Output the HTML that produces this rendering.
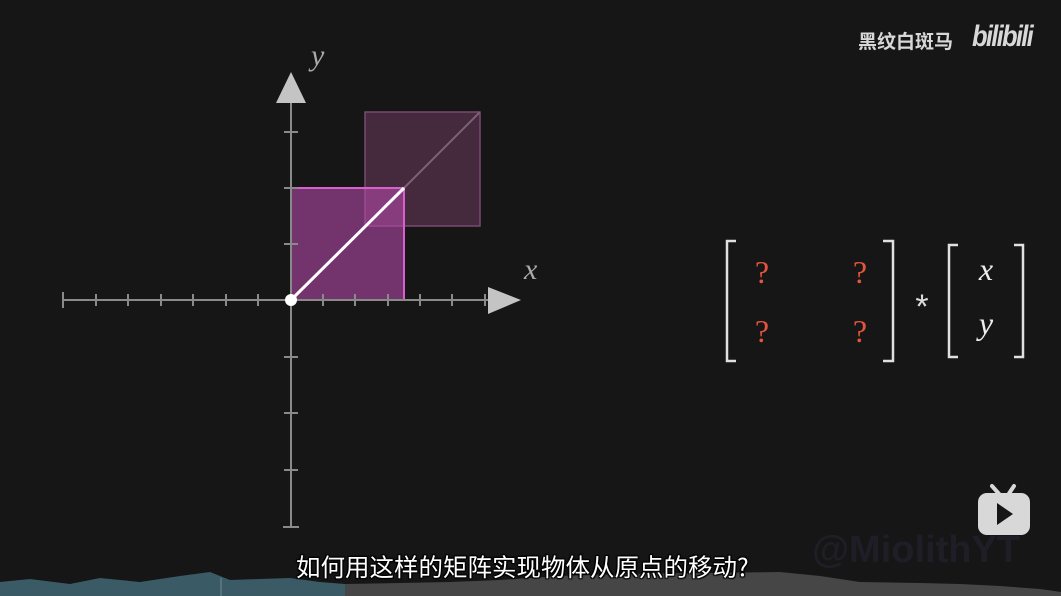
<!DOCTYPE html>
<html><head><meta charset="utf-8"><style>
html,body{margin:0;padding:0;background:#161616;width:1061px;height:596px;overflow:hidden;position:relative;font-family:"Liberation Sans","Noto Sans CJK SC",sans-serif}
.sub{position:absolute;left:296px;top:549px;font-size:24.5px;color:#fff;white-space:nowrap;text-shadow:0 0 2px #000,1px 1px 1px #000,-1px -1px 1px #000,1px -1px 1px #000,-1px 1px 1px #000;font-family:"Noto Sans CJK SC",sans-serif}
.brand{position:absolute;left:858px;top:27px;font-size:19px;font-weight:bold;color:#d8d8d8;font-family:"Noto Sans CJK SC",sans-serif}
.bili{position:absolute;left:972px;top:20px;font-size:30px;font-weight:bold;font-style:italic;color:#d8d8d8;letter-spacing:-2px;transform:scaleX(0.85);transform-origin:left}
</style></head><body>
<svg width="1061" height="596" style="position:absolute;left:0;top:0">
<path d="M0,596 L0,582 L30,579 L70,584 L100,578 L140,582 L180,576 L210,572 L230,580 L260,579 L290,578 L320,582 L345,584 L345,596Z" fill="#3a5a66"/>
<line x1="221" y1="578" x2="221" y2="596" stroke="#6f8c95" stroke-width="1"/>
<path d="M345,596 L345,584 L400,583 L450,582 L500,580 L560,576 L620,574 L700,573 L780,572 L820,576 L860,582 L920,583 L960,584 L1000,586 L1040,589 L1061,592 L1061,596Z" fill="#464646"/>
<text x="812" y="562" font-family="Liberation Sans" font-weight="bold" font-size="38" fill="#1f1e27">@MiolithYT</text>
<rect x="365" y="112" width="115" height="114" fill="#5a3350" fill-opacity="0.7" stroke="#7a4a70" stroke-width="1.5"/>
<line x1="404" y1="188" x2="480" y2="112" stroke="#7d5f76" stroke-width="2"/>
<rect x="291" y="188" width="113" height="112" fill="#b24aa8" fill-opacity="0.6" stroke="#d860cc" stroke-width="2"/>
<g stroke="#8a8a8a" stroke-width="2">
<line x1="62" y1="300" x2="492" y2="300"/>
<line x1="291" y1="100" x2="291" y2="528"/>
<line x1="63" y1="292" x2="63" y2="308"/><line x1="96" y1="294" x2="96" y2="306"/><line x1="128" y1="294" x2="128" y2="306"/><line x1="161" y1="294" x2="161" y2="306"/><line x1="193" y1="294" x2="193" y2="306"/><line x1="226" y1="294" x2="226" y2="306"/><line x1="258" y1="294" x2="258" y2="306"/><line x1="323" y1="294" x2="323" y2="306"/><line x1="355" y1="294" x2="355" y2="306"/><line x1="388" y1="294" x2="388" y2="306"/><line x1="420" y1="294" x2="420" y2="306"/><line x1="452" y1="294" x2="452" y2="306"/><line x1="485" y1="294" x2="485" y2="306"/>
<line x1="284" y1="132" x2="298" y2="132"/><line x1="284" y1="188" x2="298" y2="188"/><line x1="284" y1="244" x2="298" y2="244"/><line x1="284" y1="357" x2="298" y2="357"/><line x1="284" y1="413" x2="298" y2="413"/><line x1="284" y1="470" x2="298" y2="470"/><line x1="283" y1="527" x2="299" y2="527"/>
</g>
<polygon points="488,287 521,300 488,314" fill="#c4c4c4"/>
<polygon points="276,103 291,72 306,103" fill="#c4c4c4"/>
<line x1="291" y1="300" x2="404" y2="188" stroke="#fff" stroke-width="3"/>
<circle cx="291" cy="300" r="6" fill="#fff"/>
<text x="311" y="65" font-family="Liberation Serif" font-style="italic" font-size="30" fill="#aaa">y</text>
<text x="524" y="279" font-family="Liberation Serif" font-style="italic" font-size="30" fill="#aaa">x</text>
<g stroke="#e0e0e0" stroke-width="2.5" fill="none">
<path d="M736,241 H727 V361 H736"/>
<path d="M883,241 H893 V361 H883"/>
<path d="M958,245 H949 V357 H958"/>
<path d="M1014,245 H1023 V357 H1014"/>
</g>
<g font-family="Liberation Serif" font-size="32" fill="#e4553f" text-anchor="middle">
<text x="762" y="283">?</text><text x="860" y="283">?</text>
<text x="762" y="342">?</text><text x="860" y="342">?</text>
</g>
<text x="922" y="318" font-family="Liberation Sans" font-size="34" fill="#ddd" text-anchor="middle">*</text>
<text x="986" y="280" font-family="Liberation Serif" font-style="italic" font-size="32" fill="#eee" text-anchor="middle">x</text>
<text x="986" y="334" font-family="Liberation Serif" font-style="italic" font-size="32" fill="#eee" text-anchor="middle">y</text>
<path d="M992,486 L1000,495 M1014,486 L1008,495" stroke="#d8d8d8" stroke-width="4" stroke-linecap="round"/>
<rect x="978" y="493" width="52" height="42" rx="9" fill="#d8d8d8"/>
<polygon points="997,503 1013,514 997,525" fill="#161616"/>
</svg>
<div class="brand">黑纹白斑马</div>
<div class="bili">bilibili</div>
<div class="sub">如何用这样的矩阵实现物体从原点的移动?</div>
</body></html>
